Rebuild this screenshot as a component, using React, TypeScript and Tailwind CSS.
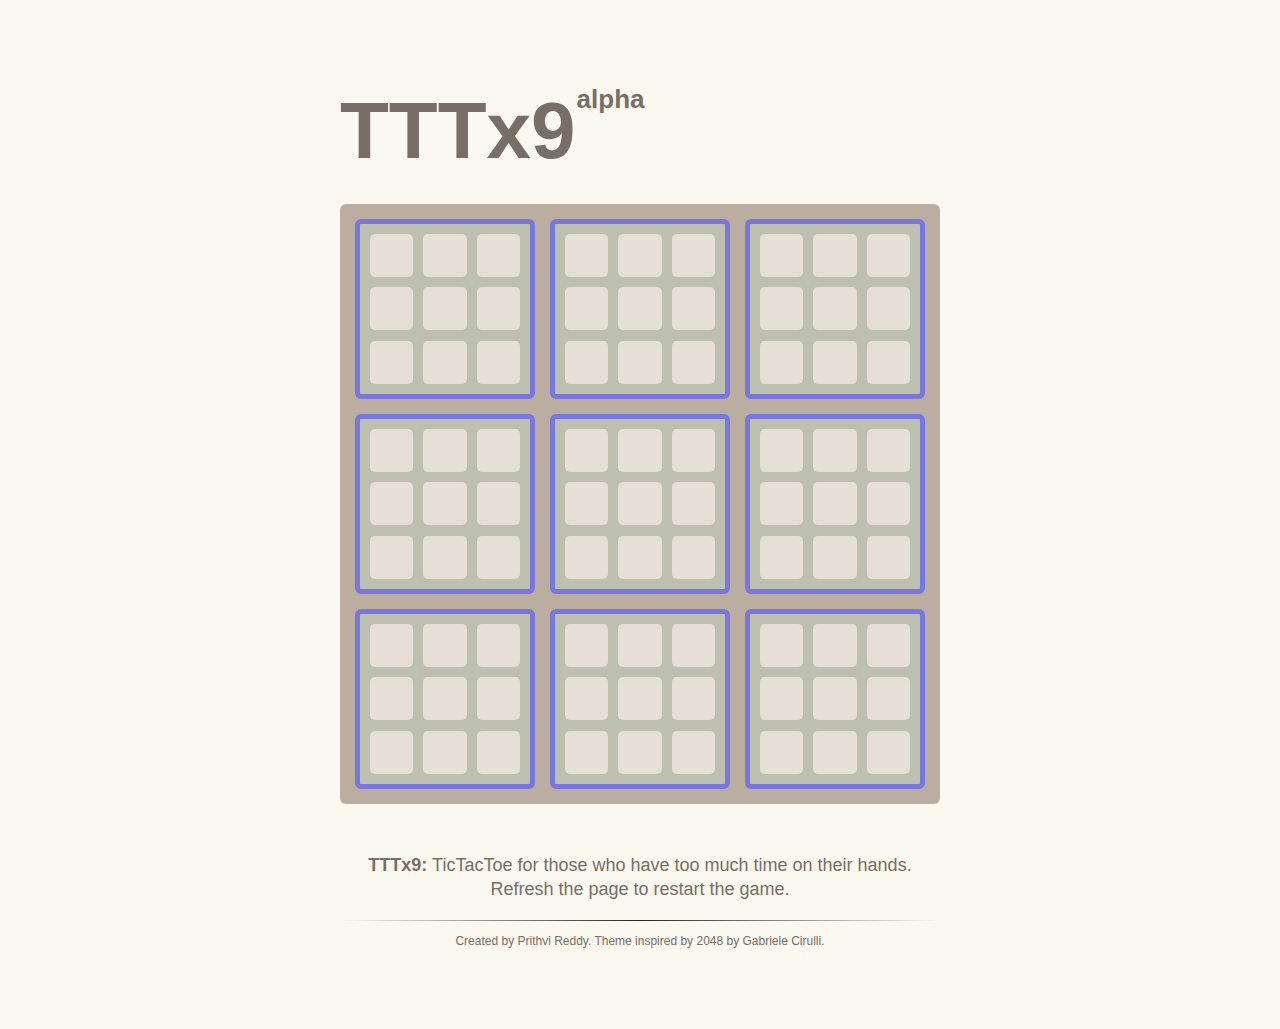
import React from 'react';

const Cell: React.FC = () => <div className="h-[43px] rounded-[5px] bg-[#e6dfd6]"></div>;

const SubBoard: React.FC = () => (
  <div className="w-[180px] h-[180px] rounded-[6px] border-[5px] border-[#7777dd] bg-[#bdc0b1] p-[10px] grid grid-cols-3 grid-rows-3 gap-x-[10px] gap-y-[10px]">
    {[...Array(9)].map((_, i) => (
      <Cell key={i} />
    ))}
  </div>
);

export default function App() {
  return (
    <div className="min-h-[1029px] bg-[#faf8ef] text-[#776e65] font-['Liberation_Sans',Arial,sans-serif]">
      <div className="w-[600px] mx-auto pt-[91px]">
        {/* Heading */}
        <h1 className="flex items-start font-bold">
          <span className="text-[80px] leading-[80px]">TTTx9</span>
          <span className="text-[26px] leading-[26px] -mt-[5px] ml-[1px]">alpha</span>
        </h1>

        {/* Board */}
        <div className="mt-[33px] w-[600px] h-[600px] rounded-[6px] bg-[#bbada0] p-[15px] grid grid-cols-3 gap-[15px]">
          {[...Array(9)].map((_, i) => (
            <SubBoard key={i} />
          ))}
        </div>

        {/* Explanation */}
        <p className="mt-[49px] text-center text-[18px] leading-[24px]">
          <strong>TTTx9:</strong> TicTacToe for those who have too much time on their hands.
          <br />
          Refresh the page to restart the game.
        </p>

        <hr className="mt-[19px] h-px border-0 bg-[linear-gradient(to_right,rgba(119,110,101,0),rgba(0,0,0,0.85)_50%,rgba(119,110,101,0))]" />

        <p className="mt-[11px] text-center text-[12px] leading-[18px]">
          Created by Prithvi Reddy. Theme inspired by 2048 by Gabriele Cirulli.
        </p>
      </div>
    </div>
  );
}
